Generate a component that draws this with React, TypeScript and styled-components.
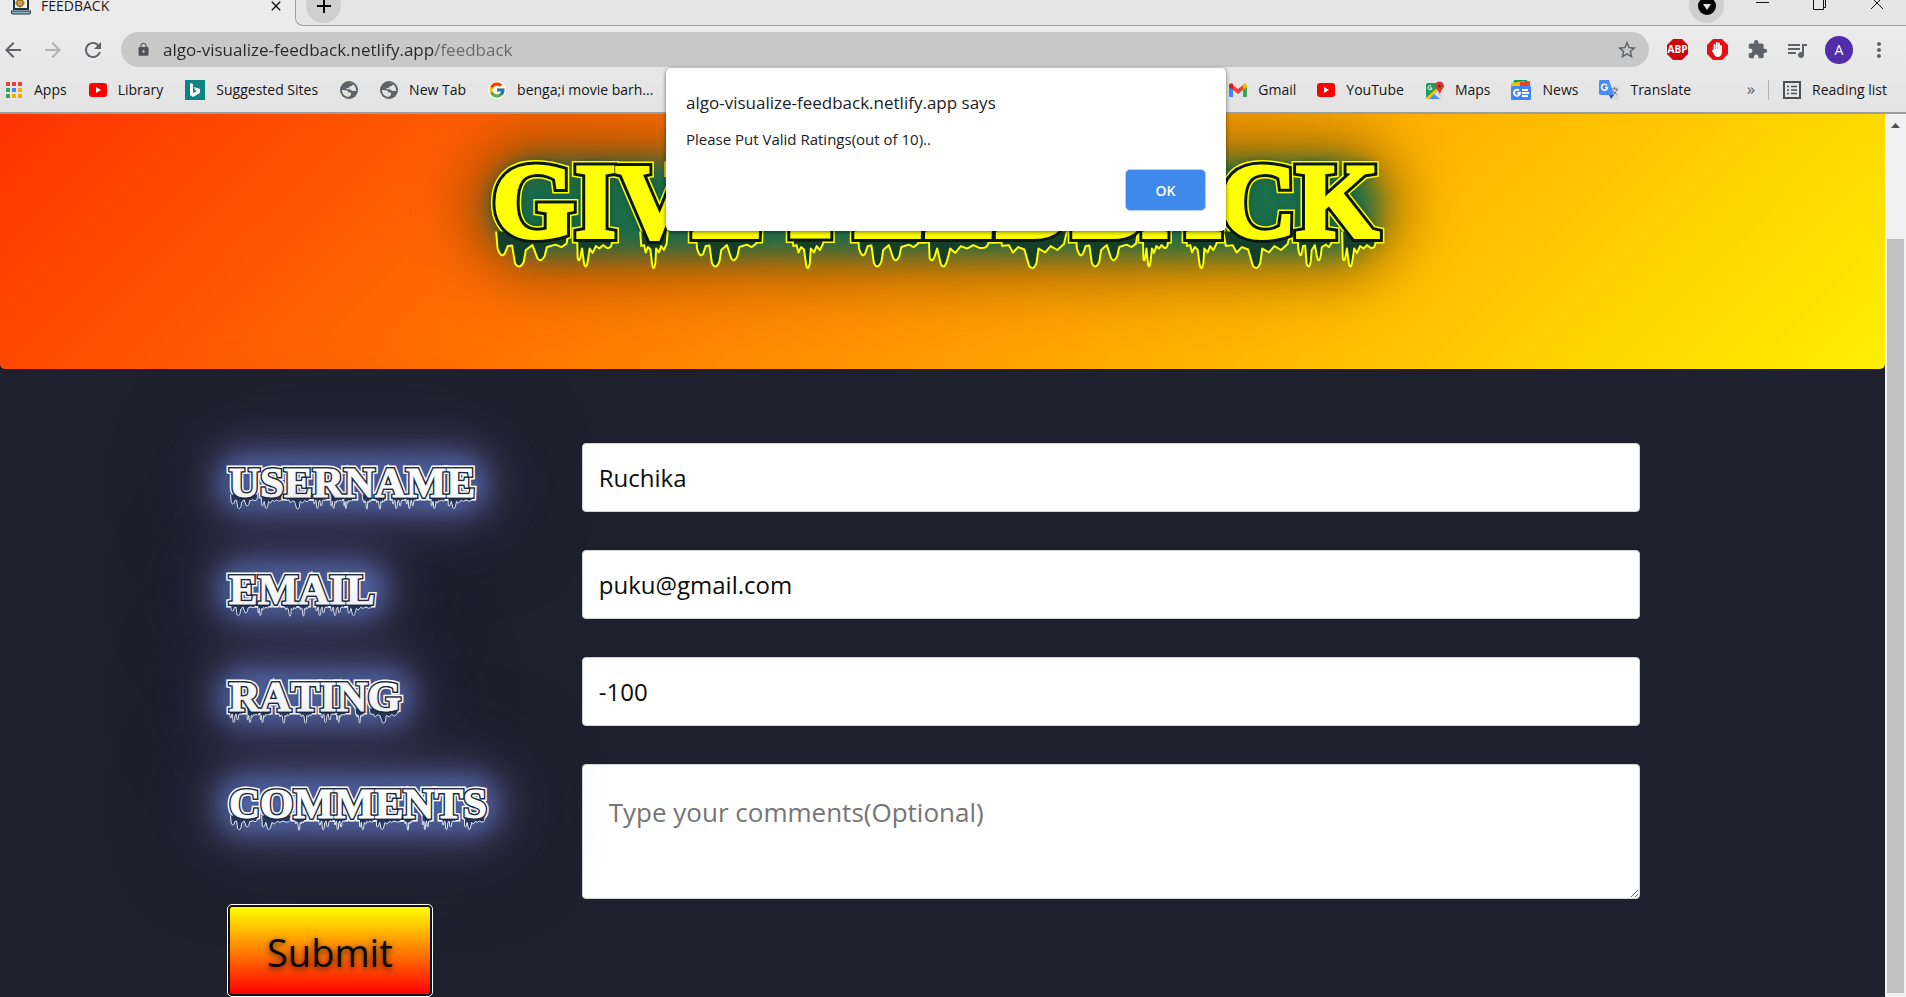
import React from 'react';
import styled, { createGlobalStyle } from 'styled-components';
import {
  MdAdd, MdArrowBack, MdArrowForward, MdClose, MdExtension, MdLock,
  MdMoreVert, MdQueueMusic, MdRefresh, MdStarBorder,
} from 'react-icons/md';
import { FcGoogle } from 'react-icons/fc';

const uiFont = "'Open Sans', 'Noto Sans', sans-serif";
const spookyFont = "'Liberation Serif', serif";

const GlobalStyle = createGlobalStyle`
  *, *::before, *::after { box-sizing: border-box; }
  body { margin: 0; font-family: ${uiFont}; background: #1e202d; }
  button, input, textarea { font-family: inherit; margin: 0; }
  svg { display: block; flex: none; }
`;

const Window = styled.div`
  display: flex;
  flex-direction: column;
  height: 100vh;
  min-width: 1200px;
  overflow: hidden;
  position: relative;
`;

/* ---------- browser chrome ---------- */

const Chrome = styled.header`
  flex: none;
  background: linear-gradient(#ebebeb 30px, #e3e3e3);
  border-bottom: 2px solid #9d9d9d;
`;

const TabRow = styled.div`
  display: flex;
  height: 26px;
  overflow: hidden;
`;

const Tab = styled.div`
  display: flex;
  gap: 10px;
  width: 295px;
  height: 20px;
  padding: 0 11px;
  margin-top: -4px;
  align-items: center;
  font-size: 14px;
  line-height: 20px;
  color: #1c1c1c;
`;

const TabTitle = styled.span`
  flex: 1;
`;

const TabStrip = styled.div`
  flex: 1;
  display: flex;
  justify-content: space-between;
  background: #e5e5e5;
  border-left: 1px solid #a0a0a0;
  border-bottom: 1px solid #a0a0a0;
  border-bottom-left-radius: 8px;
`;

const IconButton = styled.button<{ $size?: number; $color?: string }>`
  display: flex;
  flex: none;
  align-items: center;
  justify-content: center;
  width: ${p => p.$size ?? 24}px;
  height: ${p => p.$size ?? 24}px;
  padding: 0;
  border: 0;
  background: none;
  color: ${p => p.$color ?? '#5f6368'};
`;

const RoundButton = styled(IconButton)`
  margin: -12px 10px 0;
  border-radius: 50%;
  background: #cfcfcf;
`;

const WindowControls = styled.div`
  display: flex;
  align-items: flex-start;
  gap: 33px;
  margin-right: 17px;
`;

const ControlDrop = styled(RoundButton)`
  margin: -12px -6px 0 0;
`;

const ControlButton = styled(IconButton)`
  margin-top: -11px;
`;

const Toolbar = styled.div`
  display: flex;
  align-items: center;
  height: 47px;
  padding: 0 17px 0 1px;
`;

const NavButtons = styled.div`
  display: flex;
  gap: 16px;
`;

const Omnibox = styled.div`
  display: flex;
  flex: 1;
  align-items: center;
  gap: 12px;
  height: 35px;
  margin: 0 16px;
  padding: 0 10px 0 15px;
  border-radius: 18px;
  background: #c8c8c8;
`;

const UrlInput = styled.input`
  flex: 1;
  min-width: 0;
  height: 28px;
  padding: 0;
  border: 0;
  outline: 0;
  font-size: 17px;
  color: transparent;
  background: linear-gradient(to right, #27282b 272px, #66686c 272px);
  background-clip: text;
  -webkit-background-clip: text;
`;

const Extensions = styled.div`
  display: flex;
  align-items: center;
  gap: 16px;
`;

const Avatar = styled(IconButton)`
  border-radius: 50%;
  background: #512da8;
  color: #fff;
  font-size: 14px;
`;

const BookmarkBar = styled.nav`
  display: flex;
  align-items: center;
  height: 39px;
  padding: 0 19px 5px 5px;
`;

const BookmarkGroup = styled.div<{ $end?: boolean }>`
  display: flex;
  align-items: center;
  gap: ${p => (p.$end ? 21 : 22)}px;
  ${p => p.$end && 'margin-left: auto;'}
`;

const Bookmark = styled.a`
  display: flex;
  align-items: center;
  gap: 11px;
  min-height: 24px;
  font-size: 14px;
  line-height: 20px;
  white-space: nowrap;
  color: #161616;
  text-decoration: none;
`;

const GoogleMark = styled.span`
  border-radius: 50%;
  background: #fff;
`;

const Overflow = styled.button`
  width: 28px;
  margin-left: 46px;
  padding: 0 0 3px;
  border: 0;
  background: none;
  font-size: 17px;
  line-height: 20px;
  color: #5f6368;
`;

const Divider = styled.span`
  width: 1px;
  height: 20px;
  margin: 0 14px 0 3px;
  background: #b2b2b2;
`;

/* ---------- page ---------- */

const Viewport = styled.div`
  display: flex;
  flex: 1;
  min-height: 0;
`;

const Page = styled.main`
  flex: 1;
  min-width: 0;
  overflow: hidden;
  background: #1e202d;
`;

const Hero = styled.section`
  display: flex;
  justify-content: center;
  height: 255px;
  padding: 35px 14px 0 0;
  overflow: hidden;
  border-radius: 0 0 5px 5px;
  background: linear-gradient(135deg, #ff3300, #fff000);
`;

type DrippingProps = { $size: number; $ring: number; $bold: number; $tone: string; $ink: string; $shade: string };

const Dripping = styled.span<DrippingProps>`
  position: relative;
  isolation: isolate;
  display: inline-block;
  font: bold ${p => p.$size}px/1 ${spookyFont};
  font-kerning: none;
  white-space: nowrap;
  color: ${p => p.$tone};
  -webkit-text-stroke: ${p => p.$bold}px ${p => p.$tone};

  &::before, &::after {
    content: attr(data-text);
    position: absolute;
    inset: 0;
    z-index: -1;
  }
  &::before {
    -webkit-text-stroke: ${p => p.$ring * 2 + 3}px ${p => p.$tone};
    text-shadow: ${p => p.$shade};
  }
  &::after {
    -webkit-text-stroke: ${p => p.$ring * 2}px ${p => p.$ink};
  }

  svg {
    position: absolute;
    left: 0;
    top: 0;
    z-index: -1;
    overflow: visible;
  }
`;

const HeroGlow = styled.i`
  position: absolute;
  inset: 12px 0 0;
  z-index: -2;
  border-radius: 50px;
  background: rgba(14, 108, 78, 0.95);
  box-shadow: 0 0 50px 26px rgba(90, 62, 0, 0.55);
  filter: blur(14px);
`;

const LabelGlow = styled.i`
  position: absolute;
  inset: -5px -10px -8px;
  z-index: -2;
  border-radius: 24px;
  background: #5466a6;
  box-shadow: 0 0 40px 14px rgba(84, 76, 138, 0.55), 0 0 80px 20px rgba(40, 46, 62, 0.5);
  filter: blur(12px);
`;

const HeroTitle = styled.h1`
  margin: 0;
  font-weight: bold;
`;

const FormArea = styled.form`
  padding: 74px 13% 0 229px;
`;

const Fields = styled.div`
  display: grid;
  grid-template-columns: 1fr 3fr;
  row-gap: 38px;
`;

const FieldLabel = styled.label`
  display: flex;
  align-items: center;
  height: 69px;
  padding-top: 10px;
`;

const TextField = styled.input`
  height: 69px;
  padding: 0 16px;
  border: 1px solid #ced4da;
  border-radius: 4px;
  background: #fff;
  font-size: 24px;
  color: #0c0c0c;
  outline: 0;
`;

const CommentField = styled.textarea`
  display: block;
  height: 135px;
  padding: 29px 26px;
  border: 1px solid #ced4da;
  border-radius: 4px;
  background: #fff;
  font-size: 26px;
  line-height: 36px;
  resize: both;
  outline: 0;
  &::placeholder { color: #757575; opacity: 1; }
`;

const SubmitButton = styled.button`
  position: relative;
  display: block;
  height: 89px;
  margin: 7px 0 0;
  padding: 2px 37px 0;
  border: 1px solid #101010;
  border-radius: 3px;
  outline: 1px solid #fff;
  outline-offset: 1px;
  box-shadow: 0 0 0 1px #101010;
  background: linear-gradient(#ffff00, #ff0000);
  font-size: 38px;
  color: #0a0500;
  text-shadow: 0 2px 6px rgba(0, 0, 0, 0.7);
`;

const ScrollTrack = styled.aside`
  display: flex;
  flex-direction: column;
  align-items: center;
  width: 21px;
  padding: 9px 2px 4px;
  background: #f1f1f1;
`;

const ScrollThumb = styled.div`
  flex: 1;
  width: 17px;
  margin-top: 111px;
  background: #c1c1c1;
`;

/* ---------- alert ---------- */

const Alert = styled.div`
  position: absolute;
  left: calc(50% - 287px);
  top: 68px;
  width: 560px;
  height: 163px;
  display: flex;
  flex-direction: column;
  padding: 22px 20px 20px;
  border-radius: 5px;
  background: #fff;
  box-shadow: 0 1px 4px rgba(0, 0, 0, 0.55);
  color: #202124;
`;

const AlertTitle = styled.h2`
  margin: 0;
  font-size: 17px;
  font-weight: normal;
  line-height: 26px;
`;

const AlertText = styled.p`
  margin: 13px 0 0;
  font-size: 15px;
  line-height: 20px;
`;

const AlertButton = styled.button`
  align-self: flex-end;
  margin-top: auto;
  width: 81px;
  height: 42px;
  border: 1px solid #b5d0f8;
  border-radius: 5px;
  background: #4089ec;
  color: #fff;
  font-size: 14px;
  font-weight: 600;
`;

/* ---------- drawings ---------- */

const advance: Record<string, number> = {
  G: 0.778, I: 0.389, V: 0.722, E: 0.667, F: 0.611, D: 0.722, B: 0.667, A: 0.722,
  C: 0.722, K: 0.778, U: 0.722, S: 0.556, R: 0.722, N: 0.722, M: 0.944, L: 0.667,
  T: 0.667, O: 0.778, ' ': 0.25,
};

const dripShapes = [
  'M0 -.4 L.02 .3 Q.07 .72 .12 .5 L.16 .2 L.22 .18 L.26 .9 Q.32 1.2 .38 .84 L.41 .36 L.5 .16 L.57 .7 Q.62 .9 .67 .6 L.7 .24 L.82 .14 L.9 .24 L.97 .1 L1 -.4',
  'M0 -.4 L.02 .7 Q.06 .9 .1 .62 L.14 .3 L.2 .95 Q.26 1.2 .31 .7 L.35 .3 L.43 .48 L.52 .2 L.62 .3 L.72 .16 L.83 .28 Q.94 .3 .96 .1 L1 -.4',
  'M0 -.4 L.04 .2 L.14 .16 L.2 .46 L.28 .24 L.37 .34 L.44 1 Q.5 1.24 .55 .9 L.58 .3 L.68 .46 L.76 .2 L.86 .36 L.96 .1 L1 -.4',
];

const feet: Record<string, [number, number][]> = {
  V: [[0.32, 0.36]], F: [[0.04, 0.5]], T: [[0.26, 0.5]], I: [[0.06, 0.88]],
  A: [[0, 0.34], [0.56, 0.42]], K: [[0.02, 0.42], [0.56, 0.42]], R: [[0.02, 0.42], [0.58, 0.4]],
  M: [[0, 0.28], [0.62, 0.36]], N: [[0, 0.3], [0.6, 0.3]], ' ': [],
};

function Drips({ text, size, tone, ink, line }: { text: string; size: number; tone: string; ink: string; line: number }) {
  let x = 0;
  const parts: React.ReactNode[] = [];
  text.split('').forEach((ch, i) => {
    const w = advance[ch] * size;
    (feet[ch] ?? [[0.05, 0.88]]).forEach(([from, span], j) => {
      parts.push(
        <path
          key={`${i}-${j}`}
          d={dripShapes[(i + j) % dripShapes.length]}
          transform={`translate(${x + from * w} ${size * 0.87}) scale(${span * w} ${size * 0.23})`}
          vectorEffect="non-scaling-stroke"
        />,
      );
    });
    x += w;
  });
  return (
    <svg width={x} height={size} fill={ink} stroke={tone} strokeWidth={line} strokeLinejoin="round" aria-hidden="true">
      {parts}
    </svg>
  );
}

function HeroText({ text }: { text: string }) {
  return (
    <Dripping data-text={text} $size={106} $ring={5} $bold={4} $tone="#ffff00" $ink="#06180f" $shade="0 0 8px #04150f, 0 0 14px #0d4a36">
      <HeroGlow />
      {text}
      <Drips text={text} size={106} tone="#ffff00" ink="#163f2a" line={2} />
    </Dripping>
  );
}

function LabelText({ text }: { text: string }) {
  return (
    <Dripping data-text={text} $size={43} $ring={2} $bold={1} $tone="#ffffff" $ink="#1c2940" $shade="0 0 5px #1c2a44, 0 0 8px #24355c">
      <LabelGlow />
      {text}
      <Drips text={text} size={43} tone="#e8ecf8" ink="#26365c" line={1} />
    </Dripping>
  );
}

const Laptop = () => (
  <svg width="20" height="18" viewBox="0 0 20 18">
    <path d="M3 0h14v12H3z" fill="#f2efe6" stroke="#1d3343" strokeWidth="2" />
    <path d="M0 14h20l-1 3H1z" fill="#8fb3c4" stroke="#1d3343" />
    <circle cx="9" cy="6" r="3" fill="none" stroke="#a87820" strokeWidth="2" />
    <path d="M9 1v10M4 6h10M12 3l4-3" stroke="#a87820" />
  </svg>
);

const AppsGrid = () => (
  <svg width="18" height="18" viewBox="0 0 18 18">
    {['#ea4335', '#ea4335', '#ea4335', '#34a853', '#4285f4', '#f9ab00', '#34a853', '#f9ab00', '#f9ab00'].map((c, i) => (
      <rect key={i} x={(i % 3) * 6 + 1} y={Math.floor(i / 3) * 6 + 1} width="4" height="4" fill={c} />
    ))}
  </svg>
);

const YouTube = () => (
  <svg width="18" height="18" viewBox="0 0 18 18">
    <rect x="0" y="2" width="18" height="14" rx="3" fill="#f00" />
    <path d="M7 6l5 3-5 3z" fill="#fff" />
  </svg>
);

const Bing = () => (
  <svg width="20" height="20" viewBox="0 0 20 20">
    <path d="M0 0h20v20H0z" fill="#0c8484" />
    <path d="M5 3l3 1v9l4-2-2-1-1-3 6 2v4l-7 4-3-2z" fill="#fff" />
  </svg>
);

const Globe = () => (
  <svg width="18" height="18" viewBox="0 0 18 18">
    <circle cx="9" cy="9" r="9" fill="#5f6368" />
    <path d="M2 9c3 0 6 0 6.500 2.500H11V14c-1 1-2 1-2 2-4 0-7-3-7-7zM9 2c2 0 3 .5 4 1.500-.5 1.500-2 2-4 2V7H6.500v1.500C9 8 11 8.500 12 10h4c.3-3-1-6-4-7.500z" fill="#e2e2e2" />
  </svg>
);

const Gmail = () => (
  <svg width="18" height="18" viewBox="0 0 18 18">
    <path d="M0 5l4 3v8H1q-1 0-1-1z" fill="#4285f4" />
    <path d="M18 5l-4 3v8h3q1 0 1-1z" fill="#34a853" />
    <path d="M4 4l5 4 5-4v5l-5 4-5-4z" fill="#ea4335" />
    <path d="M0 4q1-3 4-1v6L0 6z" fill="#c5221f" />
    <path d="M18 4q-1-3-4-1v6l4-3z" fill="#fbbc04" />
  </svg>
);

const Maps = () => (
  <svg width="19" height="19" viewBox="0 0 19 19">
    <rect x="1" y="2" width="16" height="16" rx="2" fill="#d8dbe0" />
    <path d="M1 4q0-2 2-2h9l-1 7-10 8z" fill="#1e9e58" />
    <path d="M1 17L12 7l2 2L4 18H3q-2 0-2-1z" fill="#fbc116" />
    <path d="M4 18l5-5 6 5z" fill="#4f8df6" />
    <path d="M10 5a4 4 0 0 1 9 0c0 3-4 4-4 9-1-5-5-6-5-9z" fill="#d63b2f" />
    <circle cx="14.5" cy="5" r="1.5" fill="#7b1f18" />
    <path d="M6 5a2 2 0 1 0 1 2H5" fill="none" stroke="#fff" />
  </svg>
);

const News = () => (
  <svg width="20" height="20" viewBox="0 0 20 20">
    <path d="M3 0h13l2 7H2z" fill="#0f9d58" />
    <path d="M0 3l14-2 4 6H0z" fill="#fbbc04" />
    <path d="M9 2l10-1v6H9z" fill="#ea4335" />
    <rect y="6" width="20" height="14" rx="1" fill="#4285f4" />
    <path d="M8 10.500a3 3 0 1 0 1 2.500H6.500M11 10h6M11 13h7M11 16h6" fill="none" stroke="#fff" strokeWidth="2" />
  </svg>
);

const Translate = () => (
  <svg width="20" height="20" viewBox="0 0 20 20">
    <path d="M7 6h13v14h-8z" fill="#dcdcdc" />
    <path d="M1 0h9l5 15H2q-2 0-2-2V2q0-2 1-2z" fill="#4c8bf5" />
    <path d="M10 15h5l-3 4z" fill="#3949ab" />
    <path d="M8 5.500a3 3 0 1 0 .5 2H6" fill="none" stroke="#fff" strokeWidth="1.500" />
    <path d="M12 9h7M15.500 7v2M18 9q-1 4-4 6M14 11l4 4" fill="none" stroke="#6c7d86" />
  </svg>
);

const ReadingList = () => (
  <svg width="18" height="18" viewBox="0 0 18 18" fill="none" stroke="#4d5156" strokeWidth="2">
    <path d="M1 1h16v16H1z" />
    <path d="M4 5.500h2M8 5.500h6M4 9h2M8 9h6M4 12.500h2M8 12.500h6" strokeWidth="1.500" />
  </svg>
);

const octagon = 'M6 0h9l6 6v9l-6 6H6l-6-6V6z';

const AdBlockPlus = () => (
  <svg width="21" height="21" viewBox="0 0 21 21">
    <path d={octagon} fill="#cc0a0a" />
    <text x="10.5" y="14" textAnchor="middle" fontFamily="Open Sans, sans-serif" fontWeight="bold" fontSize="10" fill="#fff">ABP</text>
  </svg>
);

const AdBlock = () => (
  <svg width="21" height="21" viewBox="0 0 21 21">
    <path d={octagon} fill="#e60f13" />
    <path d="M7.500 11V6M9.800 10V4M12 10V4.500M14 11V7" stroke="#fff" strokeWidth="1.800" strokeLinecap="round" />
    <path d="M6.600 10h8.300v4q-1 4-4 4-3 0-4-3l-2-3q0-1.500 1.700-.5z" fill="#fff" />
  </svg>
);

const DropMark = () => (
  <svg width="18" height="18" viewBox="0 0 18 18">
    <circle cx="9" cy="9" r="9" fill="#000" />
    <path d="M5 7h8l-4 6z" fill="#e5e5e5" />
  </svg>
);

const Minimize = () => (
  <svg width="14" height="20" viewBox="0 0 14 20"><path d="M0 11.500h13" stroke="#111" /></svg>
);
const Restore = () => (
  <svg width="14" height="20" viewBox="0 0 14 20" fill="none" stroke="#111">
    <path d="M.5 8.500h10v10H.5zM3 8V6.500h9.500v10H11" />
  </svg>
);
const CloseWindow = () => (
  <svg width="14" height="20" viewBox="0 0 14 20"><path d="M1 6l12 12M13 6L1 18" stroke="#111" /></svg>
);
const ScrollUp = () => (
  <svg width="9" height="5" viewBox="0 0 9 5"><path d="M0 5l4.500-5L9 5z" fill="#505050" /></svg>
);

/* ---------- app ---------- */

export default function App() {
  return (
    <Window>
      <GlobalStyle />
      <Chrome>
        <TabRow>
          <Tab>
            <Laptop />
            <TabTitle>FEEDBACK</TabTitle>
            <IconButton $size={16} $color="#111" aria-label="Close tab"><MdClose size={16} /></IconButton>
          </Tab>
          <TabStrip>
            <RoundButton $size={35} $color="#000" aria-label="New tab"><MdAdd size={24} /></RoundButton>
            <WindowControls>
              <ControlDrop $size={35} aria-label="Search tabs"><DropMark /></ControlDrop>
              <ControlButton aria-label="Minimize"><Minimize /></ControlButton>
              <ControlButton aria-label="Restore"><Restore /></ControlButton>
              <ControlButton aria-label="Close"><CloseWindow /></ControlButton>
            </WindowControls>
          </TabStrip>
        </TabRow>
        <Toolbar>
          <NavButtons>
            <IconButton aria-label="Back"><MdArrowBack size={24} /></IconButton>
            <IconButton $color="#b0b2b4" aria-label="Forward"><MdArrowForward size={24} /></IconButton>
            <IconButton aria-label="Reload"><MdRefresh size={24} /></IconButton>
          </NavButtons>
          <Omnibox>
            <MdLock size={15} color="#4d5054" />
            <UrlInput aria-label="Address" defaultValue="algo-visualize-feedback.netlify.app/feedback" />
            <IconButton aria-label="Bookmark this page"><MdStarBorder size={22} /></IconButton>
          </Omnibox>
          <Extensions>
            <IconButton aria-label="AdBlock Plus"><AdBlockPlus /></IconButton>
            <IconButton aria-label="AdBlock"><AdBlock /></IconButton>
            <IconButton aria-label="Extensions"><MdExtension size={21} /></IconButton>
            <IconButton aria-label="Media"><MdQueueMusic size={24} /></IconButton>
            <Avatar $size={28} aria-label="Profile">A</Avatar>
            <IconButton $size={20} aria-label="Menu"><MdMoreVert size={24} /></IconButton>
          </Extensions>
        </Toolbar>
        <BookmarkBar>
          <BookmarkGroup>
            <Bookmark href="#apps"><AppsGrid />Apps</Bookmark>
            <Bookmark href="#library"><YouTube />Library</Bookmark>
            <Bookmark href="#suggested"><Bing />Suggested Sites</Bookmark>
            <Bookmark href="#site" aria-label="Site"><Globe /></Bookmark>
            <Bookmark href="#newtab"><Globe />New Tab</Bookmark>
            <Bookmark href="#movie"><GoogleMark><FcGoogle size={18} /></GoogleMark>benga;i movie barh...</Bookmark>
          </BookmarkGroup>
          <BookmarkGroup $end>
            <Bookmark href="#gmail"><Gmail />Gmail</Bookmark>
            <Bookmark href="#youtube"><YouTube />YouTube</Bookmark>
            <Bookmark href="#maps"><Maps />Maps</Bookmark>
            <Bookmark href="#news"><News />News</Bookmark>
            <Bookmark href="#translate"><Translate />Translate</Bookmark>
          </BookmarkGroup>
          <Overflow aria-label="More bookmarks">»</Overflow>
          <Divider />
          <Bookmark href="#reading"><ReadingList />Reading list</Bookmark>
        </BookmarkBar>
      </Chrome>

      <Viewport>
        <Page>
          <Hero>
            <HeroTitle><HeroText text="GIVE FEEDBACK" /></HeroTitle>
          </Hero>
          <FormArea onSubmit={e => e.preventDefault()}>
            <Fields>
              <FieldLabel htmlFor="username"><LabelText text="USERNAME" /></FieldLabel>
              <TextField id="username" defaultValue="Ruchika" />
              <FieldLabel htmlFor="email"><LabelText text="EMAIL" /></FieldLabel>
              <TextField id="email" type="email" defaultValue="puku@gmail.com" />
              <FieldLabel htmlFor="rating"><LabelText text="RATING" /></FieldLabel>
              <TextField id="rating" defaultValue="-100" />
              <FieldLabel htmlFor="comments"><LabelText text="COMMENTS" /></FieldLabel>
              <CommentField id="comments" placeholder="Type your comments(Optional)" />
            </Fields>
            <SubmitButton type="submit">Submit</SubmitButton>
          </FormArea>
        </Page>
        <ScrollTrack aria-hidden="true">
          <ScrollUp />
          <ScrollThumb />
        </ScrollTrack>
      </Viewport>

      <Alert role="alertdialog" aria-labelledby="alert-title" aria-describedby="alert-text">
        <AlertTitle id="alert-title">algo-visualize-feedback.netlify.app says</AlertTitle>
        <AlertText id="alert-text">Please Put Valid Ratings(out of 10)..</AlertText>
        <AlertButton type="button">OK</AlertButton>
      </Alert>
    </Window>
  );
}
